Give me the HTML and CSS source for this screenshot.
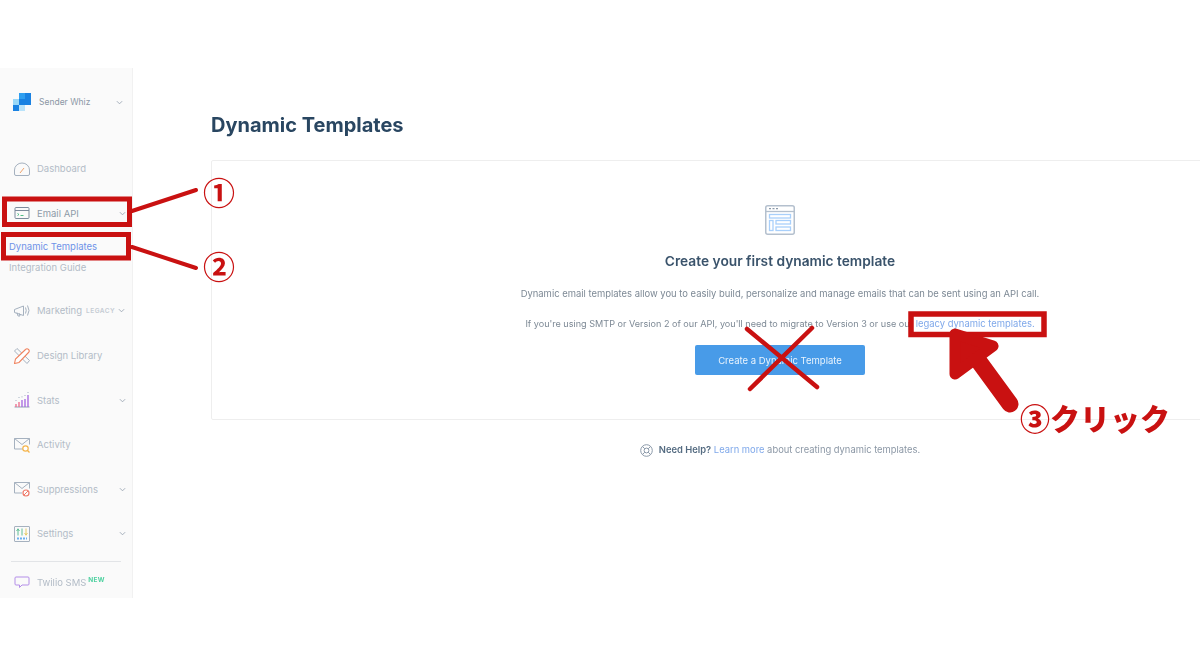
FILE: index.html
```html
<!DOCTYPE html>
<html lang="en">
    <head>
        <meta charset="utf-8">
        <title>Dynamic Templates</title>
        <link rel="stylesheet" href="styles.css">
    </head>
    <body>
        <div class="shot">
            <aside class="sidebar">
                <div class="account">
                    <svg class="logo" width="18" height="18" viewBox="0 0 18 18">
                        <rect x="6" y="0" width="6" height="6" fill="#2f9ff0"/>
                        <rect x="12" y="0" width="6" height="6" fill="#1a82e2"/>
                        <rect x="0" y="6" width="6" height="6" fill="#99d8f8"/>
                        <rect x="6" y="6" width="6" height="6" fill="#1a82e2"/>
                        <rect x="12" y="6" width="6" height="6" fill="#1a82e2"/>
                        <rect x="0" y="12" width="6" height="6" fill="#1a82e2"/>
                        <rect x="6" y="12" width="6" height="6" fill="#b9e3fa"/>
                    </svg>
                    <span class="account-name">Sender Whiz</span>
                    <svg class="chevron" viewBox="0 0 8 5"><path d="M1 1l3 3 3-3"/></svg>
                </div>

                <a class="nav-item faded">
                    <svg class="icon" viewBox="0 0 16 16"><path class="line" d="M.5 9a7.500 7 0 0 1 15 0v4q0 1.500-1.500 1.500H2q-1.500 0-1.500-1.500z"/><path d="M6 12l4-5" stroke="#f0a36b" fill="none"/></svg>
                    <span>Dashboard</span>
                </a>
                <a class="nav-item">
                    <svg class="icon" viewBox="0 0 16 16"><rect class="line dark" x="1" y="2.500" width="14" height="11" rx="1"/><path class="line dark" d="M1 5.500h14"/><path d="M3.500 8.500l1.500 1-1.500 1M6.500 10.500h3" stroke="#3cb878" fill="none" stroke-width=".9"/></svg>
                    <span>Email API</span>
                    <svg class="chevron" viewBox="0 0 8 5"><path d="M1 1l3 3 3-3"/></svg>
                </a>
                <div class="sub-nav">
                    <a class="sub-item active">Dynamic Templates</a>
                    <a class="sub-item">Integration Guide</a>
                </div>
                <a class="nav-item faded">
                    <svg class="icon" viewBox="0 0 16 16"><path class="line" d="M.5 6.500l9-3.500v9.500l-9-3zM3 9.500l1 3.500h2l-.8-2.800"/><path class="line" d="M11.500 4.500q1.500 3 0 6M13.500 2.500q3 5 0 10"/></svg>
                    <span>Marketing</span>
                    <span class="tag">LEGACY</span>
                    <svg class="chevron" viewBox="0 0 8 5"><path d="M1 1l3 3 3-3"/></svg>
                </a>
                <a class="nav-item faded">
                    <svg class="icon" viewBox="0 0 16 16"><path class="line" d="M3 .500l12.500 12-2.500 3L.5 3z"/><path d="M.5 15.500l1-4.500L11.500 1.500q1.500-1.500 3 0t0 3L5 14.500z" stroke="#f0835f" fill="#fff" stroke-width="1.100"/></svg>
                    <span>Design Library</span>
                </a>
                <a class="nav-item faded">
                    <svg class="icon" viewBox="0 0 16 16"><path d="M.5 15h15" stroke="#8fa0b3" fill="none"/><path d="M2 15v-3M5 15v-5" stroke="#ef6a8a" fill="none" stroke-width="1.300"/><path d="M8 15V8M11 15V7M14 15V3" stroke="#a566e0" fill="none" stroke-width="1.300"/><path d="M2 8v.800M5 5v.800M8 4.500v.800M11 3v.800M14 0v.800" stroke="#8fa0b3" fill="none"/></svg>
                    <span>Stats</span>
                    <svg class="chevron" viewBox="0 0 8 5"><path d="M1 1l3 3 3-3"/></svg>
                </a>
                <a class="nav-item faded">
                    <svg class="icon" viewBox="0 0 16 16"><path class="line" d="M.5 1.500h15v6M9 12H.5V1.500l7.500 6 7.500-6"/><circle cx="11.500" cy="11.500" r="2.700" fill="#fff" stroke="#f5b44a" stroke-width="1.200"/><path d="M13.500 13.500l2 2" stroke="#f5b44a" fill="none" stroke-width="1.200"/></svg>
                    <span>Activity</span>
                </a>
                <a class="nav-item faded">
                    <svg class="icon" viewBox="0 0 16 16"><path class="line" d="M.5 1.500h15v6M8 12H.5V1.500l7.500 6 7.500-6"/><circle cx="12" cy="12" r="3" fill="#fff" stroke="#ef7b6b" stroke-width="1.200"/><path d="M10 14l4-4" stroke="#ef7b6b" fill="none"/></svg>
                    <span>Suppressions</span>
                    <svg class="chevron" viewBox="0 0 8 5"><path d="M1 1l3 3 3-3"/></svg>
                </a>
                <a class="nav-item faded">
                    <svg class="icon" viewBox="0 0 16 16"><rect class="line" x=".5" y=".5" width="15" height="15" rx=".5"/><path d="M4 2.500v7M2.500 5l1.500-2 1.500 2M8 2.500v7" stroke="#4fb98a" fill="none" stroke-width=".9"/><path d="M12 2.500v7M10.500 7l1.500 2 1.500-2" stroke="#e2c65a" fill="none" stroke-width=".9"/><path d="M3 12.500h10" stroke="#6ab0f0" fill="none" stroke-width="2" stroke-dasharray="2 1"/></svg>
                    <span>Settings</span>
                    <svg class="chevron" viewBox="0 0 8 5"><path d="M1 1l3 3 3-3"/></svg>
                </a>

                <div class="divider"></div>
                <a class="twilio">
                    <svg class="icon" viewBox="0 0 16 16"><path d="M2 3h12q1 0 1 1v6q0 1-1 1H8l-2.500 2.500V11H2q-1 0-1-1V4q0-1 1-1z" stroke="#b48ee8" fill="none"/></svg>
                    <span>Twilio SMS</span>
                    <span class="tag-new">NEW</span>
                </a>
            </aside>

            <main class="content">
                <h1 class="page-title">Dynamic Templates</h1>
                <section class="card">
                    <svg class="card-icon" width="30" height="30" viewBox="0 0 30 30">
                        <rect x=".75" y=".75" width="28.500" height="28.500" rx="2" fill="none" stroke="#b4c0ce" stroke-width="1.500"/>
                        <path d="M1 6.500h28" stroke="#b4c0ce" stroke-width="1.300"/>
                        <path d="M4 3.700h2M7.500 3.700h2M11 3.700h2" stroke="#8b99a9" stroke-width="1.300"/>
                        <g fill="none" stroke="#a9d0fb" stroke-width="1.300">
                            <rect x="4.500" y="9.500" width="21" height="3.500"/>
                            <rect x="4.500" y="15.500" width="3.500" height="10"/>
                            <rect x="11" y="15.500" width="14.500" height="3.500"/>
                            <rect x="11" y="22" width="14.500" height="3.500"/>
                        </g>
                    </svg>
                    <h2 class="card-title">Create your first dynamic template</h2>
                    <p class="card-text">Dynamic email templates allow you to easily build, personalize and manage emails that can be sent using an API call.</p>
                    <p class="card-text second">If you're using SMTP or Version 2 of our API, you'll need to migrate to Version 3 or use our <a class="link">legacy dynamic templates.</a></p>
                    <button class="btn">Create a Dynamic Template</button>
                </section>
                <p class="help">
                    <svg width="13" height="13" viewBox="0 0 13 13" fill="none" stroke="#8b99a9"><circle cx="6.500" cy="6.500" r="5.800"/><circle cx="6.500" cy="6.500" r="2.400"/><path d="M2.400 2.400l2.400 2.400M10.600 2.400L8.200 4.800M2.400 10.600l2.400-2.400M10.600 10.600L8.200 8.200"/></svg>
                    <span><b>Need Help?</b> <a class="link">Learn more</a> about creating dynamic templates.</span>
                </p>
            </main>

            <!-- red annotations drawn on top of the screenshot -->
            <svg class="marks" width="1200" height="667" viewBox="0 0 1200 667">
                <g fill="none" stroke="#c91111">
                    <rect x="4.500" y="199" width="125" height="25.500" stroke-width="5"/>
                    <rect x="3.500" y="234.500" width="125" height="23.500" stroke-width="5"/>
                    <rect x="911" y="314" width="133" height="20.500" stroke-width="5.500"/>
                    <path d="M132 211L196 190M132 247L196 268" stroke-width="4" stroke-linecap="round"/>
                    <path d="M747 329L817 387M812 328L750 389" stroke-width="4.500" stroke-linecap="round"/>
                    <path d="M972 352L1010 404" stroke-width="17" stroke-linecap="round"/>
                </g>
                <path d="M955 334L993 346L955 374Z" fill="#c91111" stroke="#c91111" stroke-width="11" stroke-linejoin="round"/>
            </svg>
            <span class="mark-num one">①</span>
            <span class="mark-num two">②</span>
            <span class="mark-click">③クリック</span>
        </div>
    </body>
</html>
```

FILE: styles.css
```css
* {
    box-sizing: border-box;
}

body {
    margin: 0;
    background-color: white;
    font-family: Inter, "Noto Sans", sans-serif;
}

/* the reference is a scaled-down photo, so everything is a little soft */
.shot {
    position: relative;
    display: flex;
    width: 1200px;
    height: 667px;
    padding-top: 68px;
    overflow: hidden;
    align-items: flex-start;
    filter: blur(.35px);
}

.sidebar {
    flex: none;
    width: 133px;
    height: 530px;
    background-color: #fafafa;
    border-right: 1px solid #f1f1f1;
    color: #8e9aa8;
    font-size: 9.5px;
}

.account {
    display: flex;
    align-items: center;
    height: 68px;
    margin-bottom: 10.5px;
    padding: 0 9px 0 13px;
}

.logo {
    flex: none;
}

.account-name {
    margin-left: 8px;
    font-size: 8.5px;
    color: #8b97a5;
}

.chevron {
    width: 7px;
    height: 5px;
    margin-left: auto;
    fill: none;
    stroke: #9aa6b3;
    stroke-width: 1;
}

.nav-item {
    display: flex;
    align-items: center;
    height: 44.6px;
    padding: 0 6px 0 14px;
}

.nav-item.faded {
    color: #b3bcc7;
}

.icon {
    flex: none;
    width: 16px;
    height: 16px;
    margin-right: 7px;
}

.line {
    fill: none;
    stroke: #a5b1bf;
    stroke-width: 1;
}

.line.dark {
    stroke: #7c8b9c;
}

.sub-nav {
    margin-bottom: 10px;
}

.sub-item {
    display: flex;
    align-items: center;
    height: 21.5px;
    padding-left: 9px;
    color: #b3bcc7;
}

.sub-item.active {
    color: #6f93e8;
}

.tag {
    margin-left: 4px;
    font-size: 6.5px;
    font-weight: 600;
    letter-spacing: .5px;
    color: #c5ccd4;
}

.tag + .chevron {
    margin-left: 3px;
}

.divider {
    height: 1px;
    margin: 5px 11px 0;
    background-color: #e2e4e7;
}

.twilio {
    display: flex;
    align-items: center;
    height: 41px;
    padding: 0 0 1px 14px;
    color: #b3bcc7;
}

.tag-new {
    margin: -4px 0 0 2px;
    font-size: 6.5px;
    font-weight: 700;
    letter-spacing: .3px;
    color: #4fd1a0;
}

.content {
    flex: none;
    width: 1216px;
    padding-left: 78px;
}

.page-title {
    height: 92px;
    margin: 0;
    padding-top: 44px;
    font-size: 20px;
    line-height: 26px;
    font-weight: 700;
    color: #294661;
}

.card {
    display: flex;
    flex-direction: column;
    align-items: center;
    width: 1138px;
    height: 260px;
    padding-top: 44px;
    border: 1px solid #eeeeee;
    border-radius: 2px;
}

.card-icon {
    flex: none;
}

.card-title {
    margin: 16px 0 0;
    font-size: 13.75px;
    line-height: 20px;
    font-weight: 600;
    color: #3a536b;
}

.card-text {
    margin: 16px 0 0;
    font-size: 9.43px;
    line-height: 14px;
    color: #7d8995;
}

.card-text.second {
    margin-top: 16px;
    font-size: 9.1px;
}

.card-text.second .link {
    font-size: 9.45px;
}

.link {
    color: #7fa8ea;
}

.btn {
    width: 170px;
    height: 30px;
    margin-top: 14px;
    border: none;
    border-radius: 2px;
    background-color: #489be8;
    color: #e8f3fd;
    font-family: inherit;
    font-size: 9.5px;
}

.help {
    display: flex;
    align-items: center;
    justify-content: center;
    gap: 6px;
    width: 1138px;
    margin: 23px 0 0;
    font-size: 9.4px;
    line-height: 14px;
    color: #8b97a5;
}

.help b {
    font-weight: 600;
    color: #546b81;
}

.marks {
    position: absolute;
    top: 0;
    left: 0;
}

.mark-num {
    position: absolute;
    left: 203px;
    width: 32px;
    font-family: "Noto Sans CJK JP", sans-serif;
    font-size: 32px;
    line-height: 32px;
    font-weight: 700;
    text-align: center;
    color: #c91111;
}

.mark-num.one {
    top: 175px;
}

.mark-num.two {
    top: 249px;
}

.mark-click {
    position: absolute;
    top: 400px;
    left: 1020px;
    font-family: "Noto Sans CJK JP", sans-serif;
    font-size: 30px;
    line-height: 34px;
    font-weight: 900;
    white-space: nowrap;
    color: #c91111;
}
```
